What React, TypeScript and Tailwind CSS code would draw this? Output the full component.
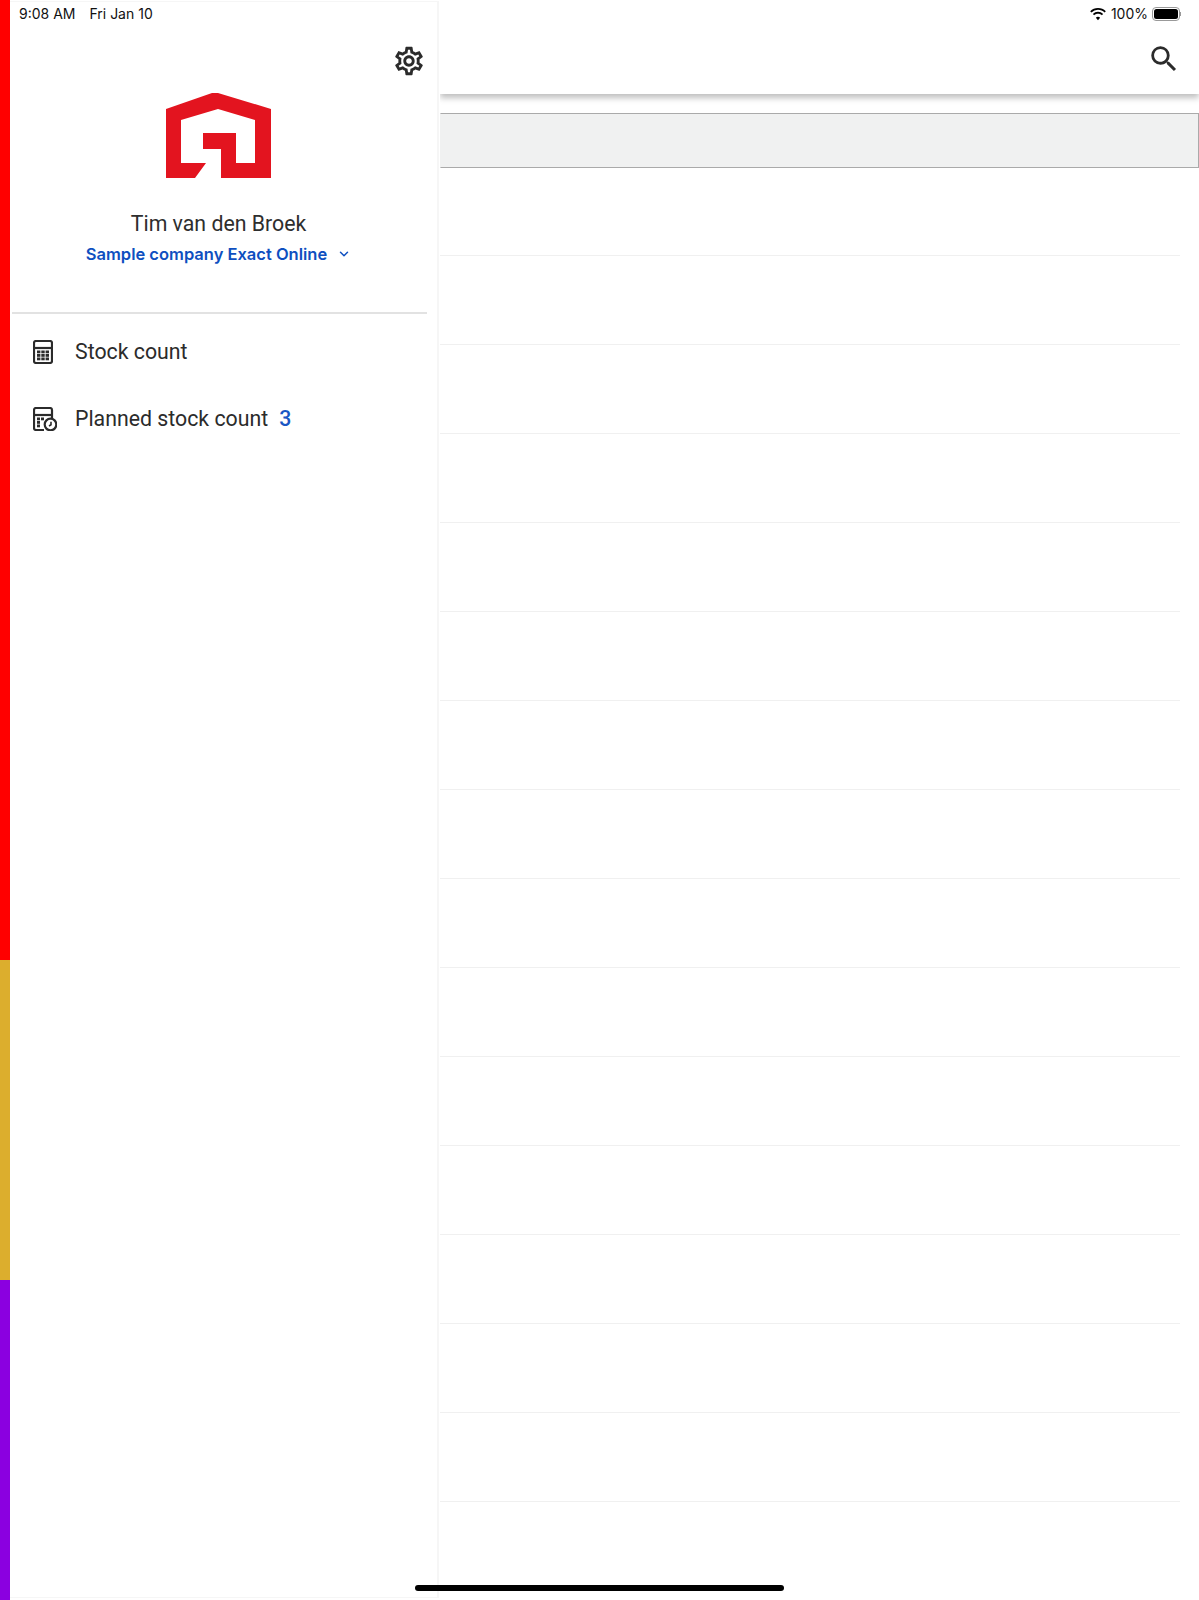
import { ChevronDown } from "lucide-react";
import { MdOutlineSettings, MdSearch } from "react-icons/md";

const rows = Array.from({ length: 15 }, (_, i) => i);

const CalcIcon = () => (
  <svg width="20" height="24" viewBox="0 0 20 24" fill="none">
    <rect x="1" y="1" width="18" height="22" rx="2" stroke="#2b2b2b" strokeWidth="2.200" />
    <line x1="1" y1="8" x2="19" y2="8" stroke="#2b2b2b" strokeWidth="2.200" />
    {[10.500, 14, 17.500].map((y) =>
      [4, 8.300, 12.600].map((x) => <rect key={`${x}-${y}`} x={x} y={y} width="3.400" height="2.800" fill="#2b2b2b" />)
    )}
  </svg>
);

const PlannedIcon = () => (
  <svg width="24" height="24" viewBox="0 0 24 24" fill="none">
    <path d="M11 23H3a2 2 0 0 1-2-2V3a2 2 0 0 1 2-2h14a2 2 0 0 1 2 2v8" stroke="#2b2b2b" strokeWidth="2.200" />
    <line x1="1" y1="8" x2="19" y2="8" stroke="#2b2b2b" strokeWidth="2.200" />
    <rect x="4" y="10.500" width="3" height="2.800" fill="#2b2b2b" />
    <rect x="4" y="14" width="3" height="2.800" fill="#2b2b2b" />
    <rect x="4" y="17.500" width="3" height="2.800" fill="#2b2b2b" />
    <rect x="8" y="10.500" width="3" height="2.800" fill="#2b2b2b" />
    <circle cx="17.500" cy="17.500" r="5.800" fill="white" stroke="#2b2b2b" strokeWidth="2.200" />
    <path d="M18 14.800v3l-2 1.200" stroke="#2b2b2b" strokeWidth="1.600" />
  </svg>
);

const Logo = () => (
  <svg width="105" height="85" viewBox="167 92 105 85">
    <path
      d="M167 108L213 92h6L272 108V177H222V148H204V132H237V162H256V119L219 108L182 119V162H207L196 177H167Z"
      fill="#e3141f"
    />
  </svg>
);

const WifiIcon = () => (
  <svg width="18" height="14" viewBox="0 0 17 13" fill="#000">
    <path d="M8.500 2.600c2.400 0 4.600.9 6.200 2.500l1.200-1.300A10.600 10.600 0 0 0 8.500.8 10.600 10.600 0 0 0 1.100 3.800l1.200 1.300A8.900 8.900 0 0 1 8.500 2.600z" />
    <path d="M8.500 6.300c1.400 0 2.700.5 3.600 1.400l1.300-1.300a7 7 0 0 0-9.800 0l1.300 1.300c.9-.9 2.200-1.400 3.600-1.400z" />
    <path d="M8.500 9.200c-.8 0-1.500.3-2 .8l2 2.300 2-2.300c-.5-.5-1.200-.8-2-.8z" />
  </svg>
);

export default function App() {
  return (
    <div className="relative flex h-[1600px] w-[1199px] overflow-hidden bg-white font-['Roboto',sans-serif] text-[#2b2b2b]">
      <div className="flex w-[10px] shrink-0 flex-col">
        <div className="h-[960px] bg-[#ff0000]" />
        <div className="h-[320px] bg-[#dcae2d]" />
        <div className="h-[320px] bg-[#8b00e0]" />
      </div>

      <aside className="mt-px mb-[2px] flex w-[429px] shrink-0 flex-col border-t border-b border-r-2 border-[#f6f6f6]">
        <div className="flex h-[24px] items-center gap-[14px] pb-[2px] pl-[9px] font-['Inter',sans-serif] text-[14px] text-[#111]">
          <span>9:08 AM</span>
          <span>Fri Jan 10</span>
        </div>
        <div className="flex justify-end pr-[11px] pt-[18px]">
          <MdOutlineSettings size={34} className="text-[#2b2b2b]" />
        </div>
        <div className="flex flex-col items-center pr-[10px] pt-[15px]">
          <Logo />
          <div className="mt-[32px] text-[21.300px] leading-[28px] text-[#2e2e2e]">Tim van den Broek</div>
          <div className="mt-[5px] flex items-center gap-[10px] font-['Inter',sans-serif] text-[16.500px] font-semibold leading-[22px] text-[#0e4fc0]">
            <span>Sample company Exact Online</span>
            <ChevronDown size={14} strokeWidth={2.500} />
          </div>
        </div>
        <div className="mx-[2px] mt-[47px] w-[415px] border-t-2 border-[#e2e2e2]" />
        <nav className="flex flex-col pt-[4px] text-[21.300px]">
          <div className="flex h-[67px] items-center gap-[22px] pl-[23px]">
            <div className="flex w-[20px] justify-center">
              <CalcIcon />
            </div>
            <span>Stock count</span>
          </div>
          <div className="flex h-[67px] items-center gap-[21px] pl-[23px]">
            <PlannedIcon />
            <span className="-ml-[3px]">Planned stock count</span>
            <span className="-ml-[10px] font-medium text-[#1a56c4]">3</span>
          </div>
        </nav>
      </aside>

      <main className="ml-px flex flex-1 flex-col overflow-hidden">
        <header className="flex h-[94px] flex-col bg-white shadow-[0_4px_6px_rgba(0,0,0,0.25)]">
          <div className="flex h-[27px] items-center justify-end gap-[4px] pr-[18px] font-['Inter',sans-serif] text-[14px] text-[#111]">
            <WifiIcon />
            <span>100%</span>
            <div className="flex items-center">
              <div className="h-[14px] w-[28px] rounded-[4px] border border-[#999] p-px">
                <div className="h-full w-full rounded-[2.500px] bg-black" />
              </div>
              <div className="h-[4px] w-px bg-[#999]" />
            </div>
          </div>
          <div className="flex justify-end pr-[18px] pt-[15px]">
            <MdSearch size={34} className="text-[#2b2b2b]" />
          </div>
        </header>
        <div className="mt-[19px] h-[55px] border border-r-[#aaa] border-y-[#aaa] border-l-transparent bg-[#f0f1f1]" />
        <div className="-mt-px flex flex-col pr-[19px]">
          {rows.map((r) => (
            <div key={r} className="h-[89px] border-b border-[#f0f0f0]" />
          ))}
        </div>
      </main>

      <div className="absolute bottom-[9px] left-[415px] h-[6px] w-[369px] rounded-full bg-black" />
    </div>
  );
}
